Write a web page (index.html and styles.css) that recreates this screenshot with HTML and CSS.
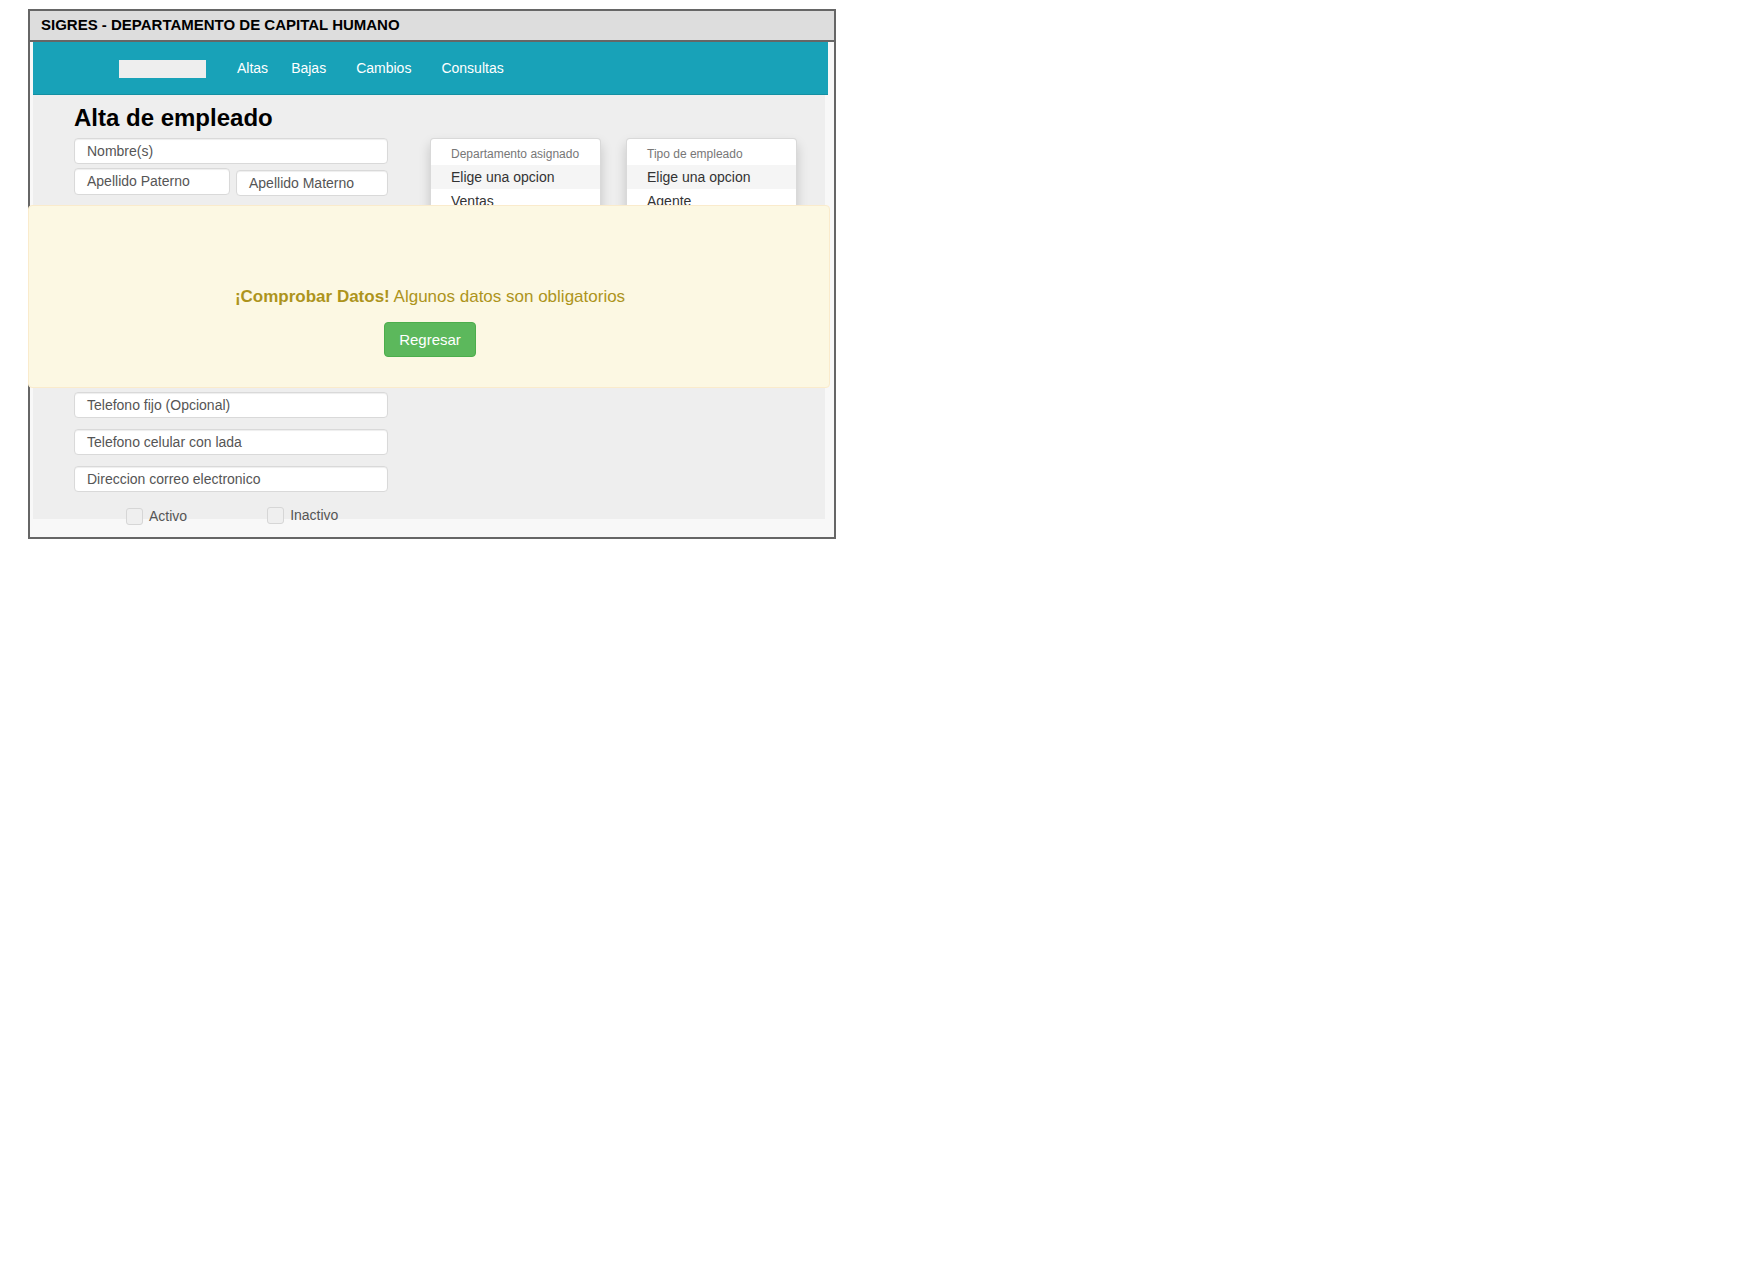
FILE: index.html
```html
<!DOCTYPE html>
<html lang="es">
<head>
<meta charset="utf-8">
<title>SIGRES - Alta de empleado</title>
<link rel="stylesheet" href="styles.css">
</head>
<body>
<div class="window">
  <div class="titlebar">SIGRES - DEPARTAMENTO DE CAPITAL HUMANO</div>
  <div class="content">
    <nav class="navbar">
      <div class="logo-box"></div>
      <a class="nav-link nav-altas" href="#">Altas</a>
      <a class="nav-link nav-bajas" href="#">Bajas</a>
      <a class="nav-link nav-wide" href="#">Cambios</a>
      <a class="nav-link nav-wide" href="#">Consultas</a>
    </nav>
    <div class="panel">
      <h1 class="page-title">Alta de empleado</h1>
      <div class="form-row">
        <div class="left-col">
          <div class="field field-full">Nombre(s)</div>
          <div class="name-row">
            <div class="field field-paterno">Apellido Paterno</div>
            <div class="field field-materno">Apellido Materno</div>
          </div>
          <div class="lower-group">
            <div class="field field-full">Telefono fijo (Opcional)</div>
            <div class="field field-full">Telefono celular con lada</div>
            <div class="field field-full">Direccion correo electronico</div>
          </div>
          <div class="check-row">
            <label class="check check-activo"><input type="checkbox" class="check-box"><span>Activo</span></label>
            <label class="check check-inactivo"><input type="checkbox" class="check-box"><span>Inactivo</span></label>
          </div>
        </div>
        <div class="dropdowns">
          <ul class="dropdown">
            <li class="dropdown-header">Departamento asignado</li>
            <li class="dropdown-item active">Elige una opcion</li>
            <li class="dropdown-item">Ventas</li>
          </ul>
          <ul class="dropdown">
            <li class="dropdown-header">Tipo de empleado</li>
            <li class="dropdown-item active">Elige una opcion</li>
            <li class="dropdown-item">Agente</li>
          </ul>
        </div>
      </div>
    </div>
  </div>
  <div class="alert">
    <p class="alert-text"><strong>¡Comprobar Datos!</strong> Algunos datos son obligatorios</p>
    <button class="btn-success" type="button">Regresar</button>
  </div>
</div>
</body>
</html>
```
FILE: styles.css
```css
* { box-sizing: border-box; }
html, body { margin: 0; padding: 0; background: #fff; }
body { font-family: "Liberation Sans", Arial, sans-serif; color: #333; }

.window {
  position: relative;
  margin: 9px 0 0 28px;
  width: 808px;
  border: 2px solid #666;
}

.titlebar {
  height: 31px;
  background: #ddd;
  border-bottom: 2px solid #666;
  padding-left: 11px;
  font-size: 15px;
  font-weight: bold;
  line-height: 27px;
  color: #000;
}

.content {
  background: #f8f8f8;
  padding: 0 6px 18px 3px;
}

.navbar {
  height: 53px;
  background: #18a2b8;
  border-bottom: 1px solid #148fa2;
  display: flex;
  align-items: center;
}

.logo-box {
  width: 87px;
  height: 18px;
  margin-left: 86px;
  margin-top: 2px;
  background: #eee;
}

.nav-link {
  color: #fff;
  text-decoration: none;
  font-size: 14px;
  line-height: 20px;
}
.nav-altas { margin-left: 31px; }
.nav-bajas { margin-left: 23px; }
.nav-wide { margin-left: 30px; }

.panel {
  background: #eee;
  width: 792px;
  height: 424px;
  padding-left: 41px;
}

.page-title {
  margin: 0;
  padding-top: 9px;
  font-size: 24px;
  line-height: 28px;
  font-weight: bold;
  color: #000;
  height: 43px;
}

.form-row {
  display: flex;
  align-items: flex-start;
}

.left-col { width: 314px; }

.field {
  background: #fff;
  border: 1px solid #d9d9d9;
  border-radius: 4px;
  box-shadow: inset 0 1px 1px rgba(0,0,0,.07);
  color: #555;
  font-size: 14px;
  height: 26px;
  line-height: 24px;
  padding-left: 12px;
  white-space: nowrap;
}
.field-full { width: 314px; }

.name-row {
  display: flex;
  align-items: flex-start;
  margin-top: 4px;
}
.field-paterno { width: 156px; height: 27px; }
.field-materno { width: 152px; margin-left: 6px; margin-top: 2px; }

.lower-group {
  margin-top: 196px;
  display: flex;
  flex-direction: column;
  gap: 11px;
}

.check-row {
  display: flex;
  align-items: flex-start;
  margin-top: 16px;
  padding-left: 52px;
}
.check {
  display: flex;
  align-items: center;
  font-size: 14px;
  color: #555;
  line-height: 17px;
}
.check-inactivo { margin-left: 80px; margin-top: -1px; }
.check-box {
  appearance: none;
  -webkit-appearance: none;
  width: 17px;
  height: 17px;
  margin: 0 6px 0 0;
  border: 1px solid #d6d6d6;
  border-radius: 3px;
  background: #efefef;
}

.dropdowns {
  display: flex;
  gap: 25px;
  margin-left: 42px;
}

.dropdown {
  list-style: none;
  margin: 0;
  width: 171px;
  padding: 5px 0;
  background: #fff;
  border: 1px solid rgba(0,0,0,.15);
  border-radius: 4px;
  box-shadow: 0 6px 12px rgba(0,0,0,.175);
}

.dropdown-header {
  font-size: 12px;
  line-height: 17px;
  padding: 2px 20px;
  color: #777;
}

.dropdown-item {
  font-size: 14px;
  line-height: 20px;
  padding: 2px 20px;
  color: #333;
}
.dropdown-item.active { background: #f5f5f5; }

.alert {
  position: absolute;
  top: 194px;
  left: -2px;
  width: 802px;
  height: 183px;
  background: #fcf8e3;
  border: 1px solid #faebcc;
  border-radius: 4px;
  padding-top: 79px;
  padding-left: 2px;
  text-align: center;
  color: #ad941c;
}

.alert-text {
  margin: 0;
  font-size: 17px;
  line-height: 24px;
}
.alert-text strong { font-weight: bold; }

.btn-success {
  margin-top: 13px;
  font-family: "Liberation Sans", Arial, sans-serif;
  font-size: 15px;
  line-height: 21px;
  padding: 6px 0;
  width: 92px;
  height: 35px;
  background: #5cb85c;
  border: 1px solid #4cae4c;
  border-radius: 4px;
  color: #fff;
}
```
